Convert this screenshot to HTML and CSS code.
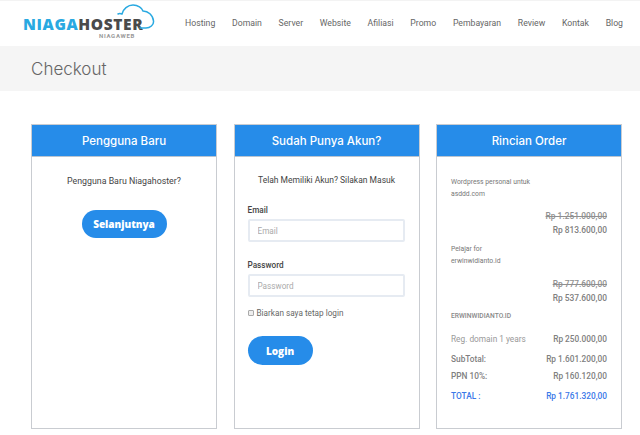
FILE: index.html
```html
<!DOCTYPE html>
<html lang="id">
<head>
    <meta charset="UTF-8">
    <meta name="viewport" content="width=device-width, initial-scale=1.0">
    <title>Checkout</title>
    <link rel="stylesheet" href="styles.css">
</head>
<body>
    <header class="topbar">
        <a class="logo" href="#">
            <span class="logo-name"><span class="logo-blue">NIAGA</span>HOSTER</span>
            <span class="logo-sub">NIAGAWEB</span>
            <svg class="logo-cloud" viewBox="0 0 40 28" width="40" height="28" aria-hidden="true">
                <path d="M1 11 C3 10 4 11 5 11 C6 6 11 2 16 2 C21 2 25 5 26 8 C31 8 36 12 36.5 18 C37 22 33 25 29 25 L23 25" fill="none" stroke="#29a9e1" stroke-width="1.5" stroke-linecap="round"/>
            </svg>
        </a>
        <nav class="menu">
            <a href="#">Hosting</a>
            <a href="#">Domain</a>
            <a href="#">Server</a>
            <a href="#">Website</a>
            <a href="#">Afiliasi</a>
            <a href="#">Promo</a>
            <a href="#">Pembayaran</a>
            <a href="#">Review</a>
            <a href="#">Kontak</a>
            <a href="#">Blog</a>
        </nav>
    </header>

    <div class="page-title">
        <h1>Checkout</h1>
    </div>

    <main class="columns">
        <section class="card">
            <h2 class="card-head">Pengguna Baru</h2>
            <div class="card-body center">
                <p class="lead">Pengguna Baru Niagahoster?</p>
                <button class="btn btn-next">Selanjutnya</button>
            </div>
        </section>

        <section class="card">
            <h2 class="card-head">Sudah Punya Akun?</h2>
            <div class="card-body">
                <p class="lead lead-login">Telah Memiliki Akun? Silakan Masuk</p>
                <label class="field-label" for="email">Email</label>
                <input class="field" id="email" type="text" placeholder="Email">
                <label class="field-label" for="password">Password</label>
                <input class="field" id="password" type="password" placeholder="Password">
                <label class="remember"><input type="checkbox">Biarkan saya tetap login</label>
                <button class="btn btn-login">Login</button>
            </div>
        </section>

        <section class="card">
            <h2 class="card-head">Rincian Order</h2>
            <div class="card-body order">
                <p class="item-name">Wordpress personal untuk<br>asddd.com</p>
                <p class="price"><s>Rp 1.251.000,00</s></p>
                <p class="price">Rp 813.600,00</p>
                <p class="item-name item-second">Pelajar for<br>erwinwidianto.id</p>
                <p class="price"><s>Rp 777.600,00</s></p>
                <p class="price">Rp 537.600,00</p>
                <p class="item-name item-domain">ERWINWIDIANTO.ID</p>
                <div class="row row-domain"><span>Reg. domain 1 years</span><b>Rp 250.000,00</b></div>
                <div class="row row-sub"><b>SubTotal:</b><b>Rp 1.601.200,00</b></div>
                <div class="row row-ppn"><b>PPN 10%:</b><b>Rp 160.120,00</b></div>
                <div class="row row-total"><b>TOTAL :</b><b>Rp 1.761.320,00</b></div>
            </div>
        </section>
    </main>
</body>
</html>
```
FILE: styles.css
```css
body {
    margin: 0;
    font-family: Roboto, Arial, sans-serif;
    background-color: #fff;
    color: #555;
    overflow: hidden;
}
.topbar {
    display: flex;
    justify-content: space-between;
    align-items: center;
    box-sizing: border-box;
    height: 46px;
    padding: 0 17px 2px 23px;
    border-top: 1px solid #f3f3f3;
}
.logo {
    position: relative;
    display: block;
    flex-shrink: 0;
    width: 134px;
    height: 41px;
    margin-top: 2px;
    text-decoration: none;
}
.logo-name {
    display: block;
    padding-top: 13px;
    font-family: "Open Sans", sans-serif;
    font-size: 15.5px;
    font-weight: 800;
    line-height: 16px;
    letter-spacing: 0.6px;
    white-space: nowrap;
    color: #4a4a4a;
}
.logo-blue {
    color: #29a9e1;
}
.logo-sub {
    display: block;
    margin: 1px 0 0 76px;
    font-size: 6px;
    font-weight: 700;
    line-height: 6px;
    letter-spacing: 0.7px;
    color: #999;
}
.logo-cloud {
    position: absolute;
    top: 0;
    left: 94px;
}
.menu {
    display: flex;
    gap: 16.7px;
}
.menu a {
    font-size: 8.7px;
    color: #666;
    text-decoration: none;
}
.page-title {
    height: 45px;
    background-color: #f5f5f5;
}
.page-title h1 {
    margin: 0;
    padding-left: 31px;
    font-family: Inter, sans-serif;
    font-size: 17px;
    font-weight: 300;
    line-height: 46px;
    color: #666;
}
.columns {
    display: grid;
    grid-template-columns: repeat(3, 186px);
    column-gap: 16.5px;
    padding: 33px 0 0 31px;
}
.card {
    height: 305px;
    box-sizing: border-box;
    border: 1px solid #c9ccd1;
}
.card-head {
    margin: 0;
    box-sizing: border-box;
    height: 32px;
    background-color: #268ce9;
    border-bottom: 1px solid #b9c4d0;
    font-family: Inter, sans-serif;
    font-size: 11.5px;
    font-weight: 500;
    line-height: 32px;
    text-align: center;
    color: #fff;
}
.card-body {
    padding: 0 13px;
}
.center {
    text-align: center;
}
.lead {
    margin: 0;
    padding-top: 18px;
    font-size: 8.8px;
    line-height: 13px;
    color: #444;
    text-align: center;
}
.lead-login {
    padding-top: 17px;
    font-size: 8.5px;
}
.btn {
    display: block;
    border: none;
    background-color: #268ce9;
    color: #fff;
    font-family: "Open Sans", sans-serif;
    font-weight: 800;
    font-size: 10px;
}
.btn-next {
    width: 85px;
    height: 28px;
    margin: 22px auto 0;
    border-radius: 14px;
}
.btn-login {
    width: 65px;
    height: 29px;
    margin-top: 17px;
    border-radius: 15px;
}
.field-label {
    display: block;
    margin-top: 17px;
    font-size: 8.2px;
    font-weight: 500;
    line-height: 12px;
    color: #444;
}
.field {
    display: block;
    box-sizing: border-box;
    width: 157px;
    height: 23px;
    margin-top: 3px;
    padding: 0 8px;
    border: 2px solid #e6ebf2;
    border-radius: 2px;
    font-family: Roboto, Arial, sans-serif;
    font-size: 8.2px;
}
.field::placeholder {
    color: #aaa;
}
.remember {
    display: flex;
    align-items: center;
    margin-top: 10px;
    font-size: 8.2px;
    line-height: 12px;
    color: #666;
}
.remember input {
    appearance: none;
    box-sizing: border-box;
    width: 6px;
    height: 6px;
    margin: 0 3px 0 0;
    border: 1px solid #aaa;
    border-radius: 1px;
    background-color: #eee;
}
.order {
    padding: 19px 14px 0;
}
.order p {
    margin: 0;
}
.item-name {
    font-size: 6.8px;
    line-height: 12px;
    color: #777;
}
.price {
    font-size: 8.4px;
    font-weight: 500;
    line-height: 14px;
    text-align: right;
    color: #808080;
}
.price s {
    color: #909090;
}
.order .item-name + .price {
    margin-top: 9px;
}
.order .item-second {
    margin-top: 6px;
}
.order .item-second + .price {
    margin-top: 10px;
}
.order .item-domain {
    margin-top: 5px;
    font-size: 6.7px;
    font-weight: 500;
    color: #888;
}
.row {
    display: flex;
    justify-content: space-between;
    font-size: 8.3px;
    line-height: 14px;
    color: #999;
}
.row b {
    font-weight: 500;
    color: #808080;
}
.row-domain {
    margin-top: 10px;
}
.row-sub {
    margin-top: 6px;
}
.row-ppn {
    margin-top: 3px;
}
.row-total {
    margin-top: 6px;
}
.row-total b {
    color: #3a78e8;
}
```
